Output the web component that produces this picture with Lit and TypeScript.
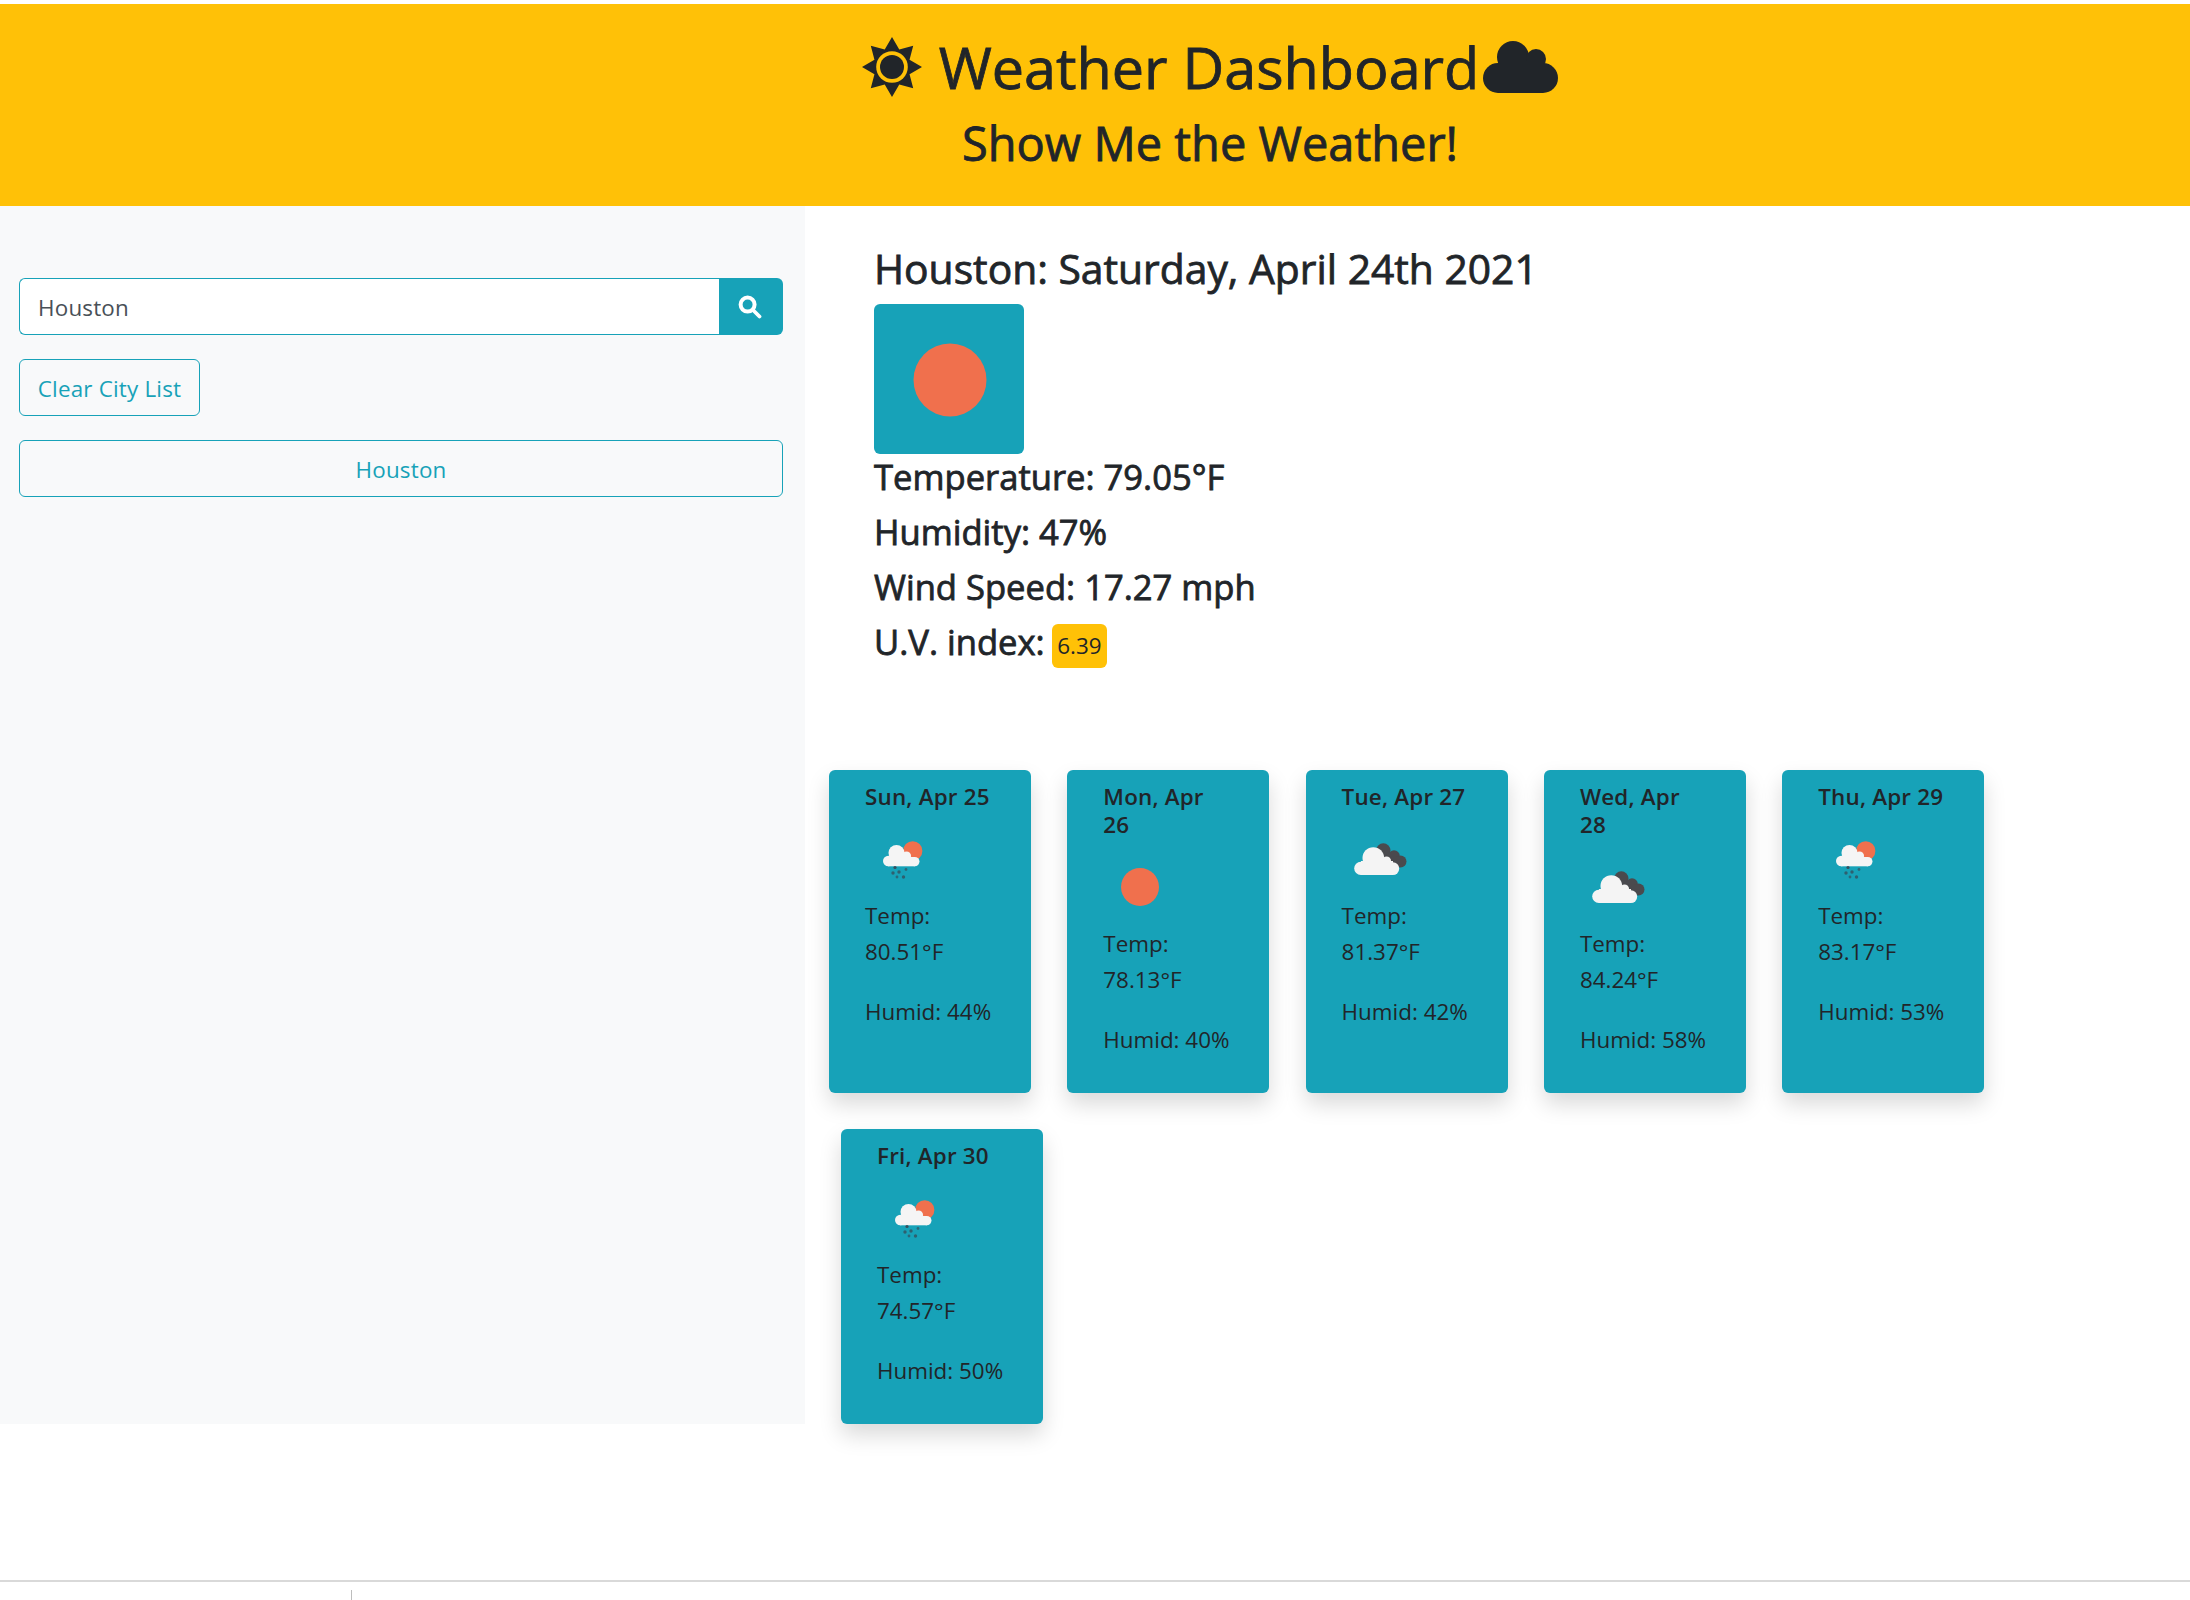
import { LitElement, html, css, svg } from "lit";
import { customElement } from "lit/decorators.js";

type Icon = "rain" | "sun" | "clouds";

interface Day {
  date: string;
  icon: Icon;
  temp: string;
  humid: string;
}

const row1: Day[] = [
  { date: "Sun, Apr 25", icon: "rain", temp: "80.51°F", humid: "44%" },
  { date: "Mon, Apr 26", icon: "sun", temp: "78.13°F", humid: "40%" },
  { date: "Tue, Apr 27", icon: "clouds", temp: "81.37°F", humid: "42%" },
  { date: "Wed, Apr 28", icon: "clouds", temp: "84.24°F", humid: "58%" },
  { date: "Thu, Apr 29", icon: "rain", temp: "83.17°F", humid: "53%" },
];
const row2: Day[] = [{ date: "Fri, Apr 30", icon: "rain", temp: "74.57°F", humid: "50%" }];

// weather pictures, all on a 70x70 canvas like the api's png
const icons: Record<Icon, unknown> = {
  sun: svg`<circle cx="37" cy="35" r="19" fill="#f0704d" />`,
  rain: svg`
    <circle cx="47.7" cy="26.9" r="9.7" fill="#f0704d" />
    <g fill="#f5f5f5">
      <circle cx="23.3" cy="37" r="5.3" />
      <circle cx="31.5" cy="29" r="8" />
      <circle cx="41.5" cy="32" r="4.6" />
      <circle cx="49.8" cy="37.6" r="4.7" />
      <rect x="23" y="33" width="27" height="9.3" />
    </g>
    <g fill="#35505e">
      <circle cx="30" cy="43.5" r="1.6" />
      <circle cx="28" cy="49" r="1.7" opacity=".8" />
      <circle cx="34" cy="48" r="1.7" opacity=".8" />
      <circle cx="41" cy="45.5" r="1.4" opacity=".7" />
      <circle cx="32" cy="53" r="1.4" opacity=".7" />
      <circle cx="38.5" cy="53" r="1.7" opacity=".8" />
    </g>`,
  clouds: svg`
    <g fill="#4a4a4e">
      <circle cx="41.3" cy="26.5" r="7.2" />
      <circle cx="52" cy="32" r="5.8" />
      <circle cx="58.5" cy="37.5" r="6" />
      <rect x="40" y="30" width="14" height="12" />
    </g>
    <g fill="#f4f4f4">
      <circle cx="18.8" cy="44.4" r="6.6" />
      <circle cx="31.3" cy="34" r="10.8" />
      <circle cx="44.5" cy="37" r="4.6" />
      <circle cx="50.8" cy="44.6" r="6.4" />
      <rect x="19" y="37" width="32" height="14" />
    </g>`,
};

// eight point star behind the header's sun
const sunPoints = Array.from({ length: 16 }, (_, i) => {
  const r = i % 2 ? 19 : 30;
  const a = (i * Math.PI) / 8;
  return `${(30 + r * Math.sin(a)).toFixed(2)},${(30 - r * Math.cos(a)).toFixed(2)}`;
}).join(" ");

@customElement("forecast-card")
class ForecastCard extends LitElement {
  static properties = { day: { attribute: false } };
  day!: Day;

  static styles = css`
    :host {
      display: block;
      width: 202px;
      box-sizing: border-box;
      padding: 13px 38px 35px 36px;
      background: #17a2b8;
      border-radius: 6px;
      box-shadow: 0 11px 22px rgba(0, 0, 0, 0.15);
      color: #212529;
      font-size: 22.4px;
    }
    .date {
      margin: 0;
      font-size: 22.4px;
      font-weight: 600;
      line-height: 28px;
      letter-spacing: 0.2px;
    }
    svg {
      display: block;
      width: 70px;
      height: 70px;
      margin: 13px 0 4px;
    }
    p {
      margin: 0;
      line-height: 36px;
      white-space: nowrap;
    }
    .humid {
      margin-top: 24px;
    }
  `;

  render() {
    const d = this.day;
    return html`
      <h5 class="date">${d.date}</h5>
      <svg viewBox="0 0 70 70">${icons[d.icon]}</svg>
      <p>Temp:<br />${d.temp}</p>
      <p class="humid">Humid: ${d.humid}</p>
    `;
  }
}

@customElement("app-root")
export class AppRoot extends LitElement {
  static styles = css`
    :host {
      display: block;
      height: 1600px;
      overflow: hidden;
      padding-top: 4px;
      box-sizing: border-box;
      background: #fff;
      color: #212529;
      font-family: "Open Sans", "Noto Sans", sans-serif;
      position: relative;
    }
    .jumbo {
      height: 202px;
      box-sizing: border-box;
      padding: 28px 0 0 230px;
      background: #ffc107;
      text-align: center;
    }
    .title-row {
      display: flex;
      justify-content: center;
      align-items: center;
      height: 70px;
    }
    /* the family has no medium cut, a thin stroke thickens the regular one */
    h1,
    .subtitle,
    h3,
    .stat-text {
      font-weight: 400;
      -webkit-text-stroke: 0.8px currentColor;
    }
    h1 {
      margin: 0;
      font-size: 57.5px;
      line-height: 70px;
      white-space: nowrap;
    }
    .sun-glyph {
      width: 60px;
      height: 60px;
      margin-right: 17px;
      flex: none;
    }
    .cloud-glyph {
      width: 75px;
      height: 52px;
      margin-left: 4px;
      flex: none;
    }
    .subtitle {
      margin: 14px 0 0;
      font-size: 47px;
      line-height: 54px;
    }
    .columns {
      display: grid;
      grid-template-columns: 805px 1fr;
      height: 1218px;
    }
    .side {
      background: #f8f9fa;
      padding: 72px 22px 0 19px;
    }
    .search {
      display: flex;
      height: 57px;
    }
    .search-text {
      flex: 1;
      display: flex;
      align-items: center;
      padding: 2px 0 0 18px;
      background: #fff;
      border: 1.4px solid #17a2b8;
      border-right: none;
      border-radius: 6px 0 0 6px;
      color: #495057;
      font-size: 22.4px;
      letter-spacing: 0.2px;
    }
    .search-btn {
      width: 64px;
      display: flex;
      align-items: center;
      justify-content: center;
      background: #17a2b8;
      border-radius: 0 6px 6px 0;
    }
    .search-btn svg {
      width: 24px;
      height: 24px;
      margin-right: 3px;
    }
    .btn {
      display: flex;
      align-items: center;
      justify-content: center;
      box-sizing: border-box;
      height: 57px;
      margin-top: 24px;
      padding-top: 2px;
      border: 1.4px solid #17a2b8;
      border-radius: 6px;
      color: #17a2b8;
      font-size: 22.4px;
      letter-spacing: 0.2px;
    }
    .btn.clear {
      width: 181px;
    }
    .main {
      padding: 35px 0 0 24px;
    }
    .today {
      padding-left: 45px;
    }
    h3 {
      margin: 0 0 9px;
      font-size: 40.8px;
      line-height: 54px;
    }
    .tile {
      display: block;
      width: 150px;
      height: 150px;
      background: #17a2b8;
      border-radius: 6px;
    }
    .stat {
      height: 47px;
      margin: 0 0 8px;
      font-size: 34.6px;
      line-height: 45px;
      white-space: nowrap;
    }
    .uv {
      display: inline-block;
      height: 44px;
      margin-left: -2px;
      padding: 0 5.6px;
      background: #ffc107;
      border-radius: 6px;
      font-size: 22.4px;
      font-weight: 400;
      line-height: 44px;
      vertical-align: 1px;
    }
    .row {
      display: flex;
      gap: 36.3px;
      align-items: stretch;
    }
    .row.first {
      margin-top: 104px;
    }
    .row.second {
      margin-top: 36px;
      padding-left: 12px;
    }
    .line {
      position: absolute;
      left: 0;
      right: 0;
      top: 1580px;
      height: 2px;
      background: #d9d9d9;
    }
    .tick {
      position: absolute;
      left: 351px;
      top: 1590px;
      width: 1px;
      height: 10px;
      background: #bdbdbd;
    }
  `;

  render() {
    return html`
      <header class="jumbo">
        <div class="title-row">
          <svg class="sun-glyph" viewBox="0 0 60 60">
            <polygon points=${sunPoints} fill="#212529" />
            <circle cx="30" cy="30" r="15.8" fill="#ffc107" />
            <circle cx="30" cy="30" r="12" fill="#212529" />
          </svg>
          <h1>Weather Dashboard</h1>
          <svg class="cloud-glyph" viewBox="0 0 75 52" fill="#212529">
            <circle cx="15" cy="37" r="15" />
            <circle cx="30" cy="16" r="16" />
            <circle cx="53" cy="18" r="10" />
            <circle cx="60" cy="37" r="15" />
            <rect x="15" y="20" width="45" height="32" />
          </svg>
        </div>
        <h2 class="subtitle">Show Me the Weather!</h2>
      </header>
      <div class="columns">
        <aside class="side">
          <div class="search">
            <div class="search-text">Houston</div>
            <div class="search-btn">
              <svg viewBox="0 0 24 24">
                <circle cx="9.6" cy="9.6" r="7" fill="none" stroke="#fff" stroke-width="4" />
                <path d="M15 15l6.5 6.5" stroke="#fff" stroke-width="3.8" stroke-linecap="round" />
              </svg>
            </div>
          </div>
          <div class="btn clear">Clear City List</div>
          <div class="btn">Houston</div>
        </aside>
        <main class="main">
          <section class="today">
            <h3>Houston: Saturday, April 24th 2021</h3>
            <svg class="tile" viewBox="0 0 150 150">
              <circle cx="76" cy="76" r="36.5" fill="#f0704d" />
            </svg>
            <p class="stat"><span class="stat-text">Temperature: 79.05°F</span></p>
            <p class="stat"><span class="stat-text">Humidity: 47%</span></p>
            <p class="stat"><span class="stat-text">Wind Speed: 17.27 mph</span></p>
            <p class="stat"><span class="stat-text">U.V. index:</span> <span class="uv">6.39</span></p>
          </section>
          <div class="row first">
            ${row1.map((d) => html`<forecast-card .day=${d}></forecast-card>`)}
          </div>
          <div class="row second">
            ${row2.map((d) => html`<forecast-card .day=${d}></forecast-card>`)}
          </div>
        </main>
      </div>
      <div class="line"></div>
      <div class="tick"></div>
    `;
  }
}
